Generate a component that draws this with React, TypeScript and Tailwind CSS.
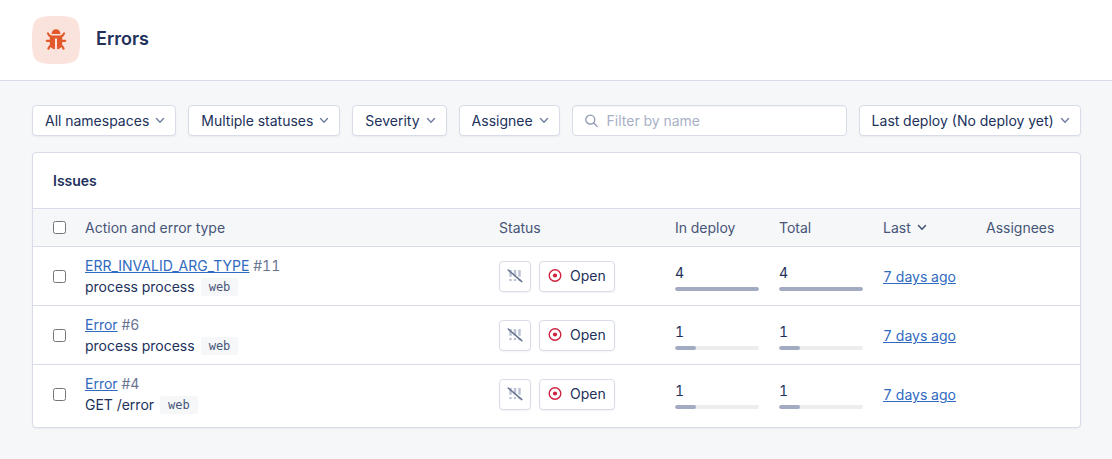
import React, { useState } from "react";

type Issue = {
  id: number;
  type: string;
  action: string;
  namespace: string;
  inDeploy: number;
  total: number;
  last: string;
};

const issues: Issue[] = [
  {
    id: 11,
    type: "ERR_INVALID_ARG_TYPE",
    action: "process process",
    namespace: "web",
    inDeploy: 4,
    total: 4,
    last: "7 days ago",
  },
  {
    id: 6,
    type: "Error",
    action: "process process",
    namespace: "web",
    inDeploy: 1,
    total: 1,
    last: "7 days ago",
  },
  {
    id: 4,
    type: "Error",
    action: "GET /error",
    namespace: "web",
    inDeploy: 1,
    total: 1,
    last: "7 days ago",
  },
];

const maxCount = Math.max(...issues.map((issue) => issue.total));

const BugIcon = () => (
  <svg viewBox="0 0 48 48" className="size-12" fill="none" aria-hidden="true">
    <path
      d="M24 0C34 0 40.5 .5 44 4 47.5 7.5 48 14 48 24s-.5 16.5-4 20C40.5 47.5 34 48 24 48S7.5 47.5 4 44C.5 40.5 0 34 0 24S.5 7.5 4 4C7.5 .5 14 0 24 0z"
      fill="#fbe3dd"
    />
    <path
      d="M14.8 24.8h4M29.2 24.8h4M16 17.5l1.4 2.1 2.4 1.4M32 17.5l-1.4 2.1-2.4 1.4M16.4 32.6l1.4-2.4 2.2-1.2M31.6 32.6l-1.4-2.4-2.2-1.2"
      stroke="#e2592b"
      strokeWidth="2.2"
      strokeLinecap="round"
      strokeLinejoin="round"
    />
    <path
      d="M19.6 18c0-2.9 1.9-4.8 4.4-4.8s4.4 1.9 4.4 4.8z"
      fill="#e2592b"
    />
    <path
      d="M17.8 19.6h12.4v8a5.8 5.8 0 0 1-5.2 5.7V22.5h-2v10.8a5.8 5.8 0 0 1-5.2-5.7z"
      fill="#e2592b"
    />
  </svg>
);

const Chevron = ({ className }: { className: string }) => (
  <svg viewBox="0 0 10 10" className={className} fill="none" aria-hidden="true">
    <path
      d="M1.5 2.5L5 6.2l3.5-3.7"
      stroke="currentColor"
      strokeLinecap="round"
      strokeLinejoin="round"
    />
  </svg>
);

const SearchIcon = () => (
  <svg
    viewBox="0 0 14 14"
    className="pointer-events-none absolute left-[13px] size-3.5"
    fill="none"
    stroke="#8d97b2"
    strokeWidth="1.3"
    strokeLinecap="round"
    aria-hidden="true"
  >
    <circle cx="5.3" cy="5.6" r="4.5" />
    <path d="M8.7 9l3.6 3.6" />
  </svg>
);

const NoSeverityIcon = () => (
  <svg viewBox="0 0 16 14" className="h-3.5 w-4" fill="none" aria-hidden="true">
    <path
      d="M3.5 1v6.8M8 1v6.8M12.5 1v6.8"
      stroke="#bcc3d4"
      strokeWidth="2.5"
    />
    <path
      d="M3.5 11h.01M8 11h.01M12.5 11h.01"
      stroke="#bcc3d4"
      strokeWidth="2.7"
      strokeLinecap="round"
    />
    <path
      d="M1.2 1l13.6 11.6"
      stroke="#66718f"
      strokeWidth="1.5"
      strokeLinecap="round"
    />
  </svg>
);

const OpenIcon = () => (
  <svg viewBox="0 0 14 14" className="size-3.5" fill="none" aria-hidden="true">
    <circle cx="7" cy="6.5" r="5.8" stroke="#d0213f" strokeWidth="1.4" />
    <circle cx="7" cy="6.5" r="2.1" fill="#d0213f" />
  </svg>
);

const Filter = ({ label, options }: { label: string; options: string[] }) => (
  <div className="relative flex items-center">
    <select
      aria-label={label}
      className="field-sizing-content h-[31px] appearance-none rounded border border-[#d8dce9] bg-white pr-[26px] pl-3 text-sm text-[#21315b] shadow-xs"
    >
      {options.map((option) => (
        <option key={option}>{option}</option>
      ))}
    </select>
    <Chevron className="pointer-events-none absolute right-[11px] size-2.5 stroke-[1.3] text-[#6f7b9c]" />
  </div>
);

const Count = ({ value }: { value: number }) => (
  <>
    <div className="leading-5">{value}</div>
    <div className="mt-1 h-1 overflow-hidden rounded-full bg-[#ededf0]">
      <div
        className="h-full rounded-full bg-[#a2abc2]"
        style={{ width: `${(value / maxCount) * 100}%` }}
      />
    </div>
  </>
);

const Checkbox = ({
  label,
  checked,
  onChange,
}: {
  label: string;
  checked: boolean;
  onChange: () => void;
}) => (
  <input
    type="checkbox"
    aria-label={label}
    checked={checked}
    onChange={onChange}
    className="block size-[13px]"
  />
);

const App = () => {
  const [selected, setSelected] = useState<number[]>([]);
  const [query, setQuery] = useState("");

  const visible = issues.filter((issue) =>
    issue.type.toLowerCase().includes(query.toLowerCase()),
  );

  const toggle = (id: number) =>
    setSelected(
      selected.includes(id)
        ? selected.filter((other) => other !== id)
        : [...selected, id],
    );

  const toggleAll = () =>
    setSelected(
      selected.length === issues.length ? [] : issues.map((issue) => issue.id),
    );

  return (
    <div className="min-h-screen bg-[#f5f7f9] font-['Inter',sans-serif] text-sm text-[#21315b] tabular-nums">
      <header className="flex gap-4 border-b border-[#d8dce9] bg-white px-8 py-4">
        <BugIcon />
        <h1 className="text-lg leading-[46px] font-semibold">Errors</h1>
      </header>

      <main className="flex flex-col gap-4 py-6 pr-[31px] pl-8">
        <div className="flex gap-3">
          <Filter label="Namespace" options={["All namespaces", "web"]} />
          <Filter label="Status" options={["Multiple statuses", "Open"]} />
          <Filter label="Severity" options={["Severity"]} />
          <Filter label="Assignee" options={["Assignee"]} />
          <div className="relative flex min-w-0 flex-1 items-center">
            <SearchIcon />
            <input
              type="text"
              aria-label="Filter by name"
              placeholder="Filter by name"
              value={query}
              onChange={(e) => setQuery(e.target.value)}
              className="h-[31px] w-full rounded border border-[#d8dce9] bg-white pr-3 pl-[34px] inset-shadow-xs placeholder:text-[#a9b1c6]"
            />
          </div>
          <Filter label="Deploy" options={["Last deploy (No deploy yet)"]} />
        </div>

        <section className="overflow-hidden rounded border border-[#d8dce9] bg-white pb-[3px] shadow-xs">
          <h2 className="px-5 leading-[55px] font-semibold">Issues</h2>
          <table className="w-full table-fixed text-left">
            <thead className="border-y border-[#d8dce9] bg-[#f5f7f9] text-[#475578]">
              <tr className="h-[38px] *:px-2.5 *:font-normal">
                <th className="w-[42px]">
                  <div className="pl-2.5">
                    <Checkbox
                      label="Select all issues"
                      checked={selected.length === issues.length}
                      onChange={toggleAll}
                    />
                  </div>
                </th>
                <th>Action and error type</th>
                <th className="w-[176px]">Status</th>
                <th className="w-[104px]">In deploy</th>
                <th className="w-[104px]">Total</th>
                <th className="w-[103px]">
                  <button className="flex items-center gap-1.5">
                    Last
                    <Chevron className="size-2.5 stroke-[1.6]" />
                  </button>
                </th>
                <th className="w-[104px]">Assignees</th>
              </tr>
            </thead>
            <tbody className="divide-y divide-[#d8dce9]">
              {visible.map((issue) => (
                <tr key={issue.id} className="h-[59px] *:px-2.5">
                  <td>
                    <div className="pl-2.5">
                      <Checkbox
                        label={`Select issue ${issue.id}`}
                        checked={selected.includes(issue.id)}
                        onChange={() => toggle(issue.id)}
                      />
                    </div>
                  </td>
                  <td className="leading-[21px]">
                    <div className="text-[#6a7593]">
                      <a href="#" className="text-[#3069c0] underline">
                        {issue.type}
                      </a>{" "}
                      #{issue.id}
                    </div>
                    <div className="flex items-center gap-1.5">
                      {issue.action}
                      <span className="rounded-xs bg-[#f5f7f9] px-2 font-['DejaVu_Sans_Mono',monospace] text-xs leading-[18px] text-[#475578]">
                        {issue.namespace}
                      </span>
                    </div>
                  </td>
                  <td>
                    <div className="flex gap-2">
                      <button
                        aria-label="Set severity"
                        className="flex h-[31px] w-8 items-center justify-center rounded border border-[#d8dce9] shadow-xs"
                      >
                        <NoSeverityIcon />
                      </button>
                      <button className="flex h-[31px] items-center gap-2 rounded border border-[#d8dce9] px-2 shadow-xs">
                        <OpenIcon />
                        Open
                      </button>
                    </div>
                  </td>
                  <td className="pt-0.5">
                    <Count value={issue.inDeploy} />
                  </td>
                  <td className="pt-0.5">
                    <Count value={issue.total} />
                  </td>
                  <td className="pt-0.5">
                    <a href="#" className="text-[#3069c0] underline">
                      {issue.last}
                    </a>
                  </td>
                  <td />
                </tr>
              ))}
            </tbody>
          </table>
        </section>
      </main>
    </div>
  );
};

export default App;
